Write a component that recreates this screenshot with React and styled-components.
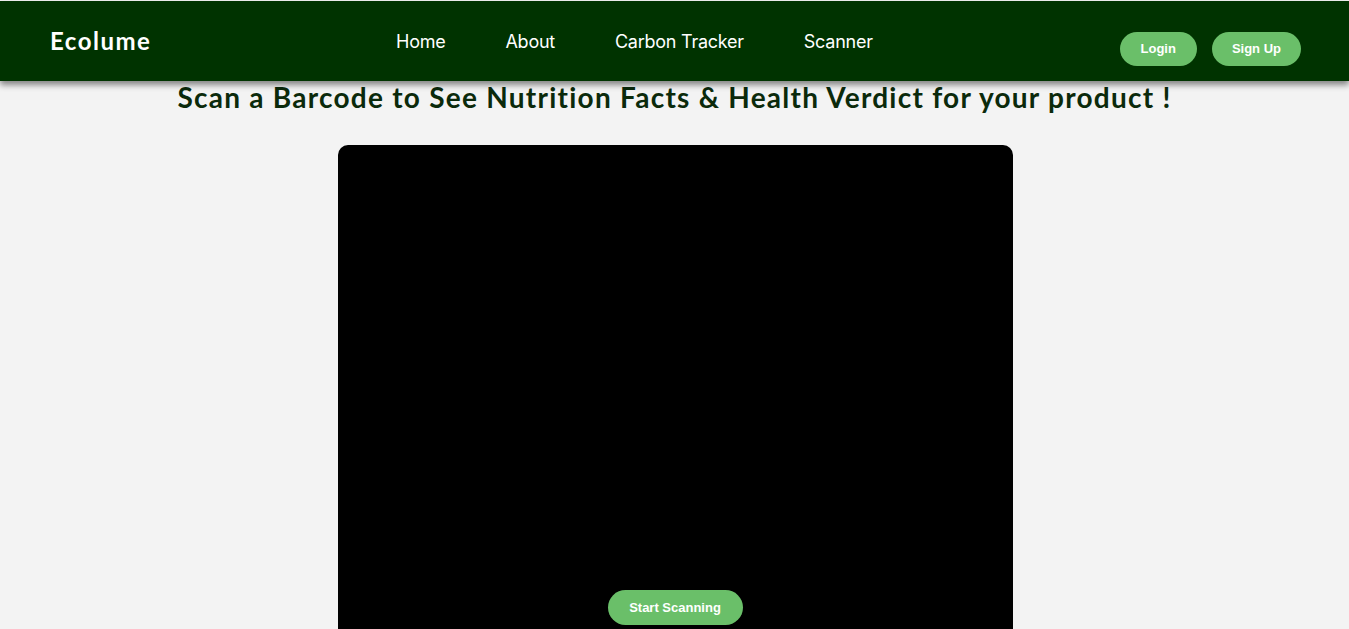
import React from 'react';
import styled, { createGlobalStyle } from 'styled-components';

const GlobalStyle = createGlobalStyle`
  body {
    margin: 0;
    background-color: #f3f3f3;
    font-family: 'Liberation Sans', Arial, sans-serif;
  }
`;

const Navbar = styled.nav`
  display: flex;
  align-items: center;
  height: 80px;
  margin-top: 1px;
  padding: 0 48px 0 50px;
  background-color: #003300;
  box-shadow: 0 4px 6px rgba(0, 0, 0, 0.45);
  position: relative;
  z-index: 1;
`;

const Logo = styled.div`
  font-family: Lato, 'Open Sans', sans-serif;
  font-weight: 700;
  font-size: 24px;
  letter-spacing: 1.5px;
  color: #ffffff;
  margin-top: -2px;
  width: 346px;
`;

const NavLinks = styled.ul`
  display: flex;
  gap: 60px;
  list-style: none;
  margin: 0;
  padding: 0;
`;

const NavLink = styled.li`
  font-family: Inter, 'Liberation Sans', sans-serif;
  font-size: 18px;
  letter-spacing: -0.25px;
  color: #ffffff;
`;

const Actions = styled.div`
  display: flex;
  gap: 15px;
  margin: 15px 0 0 auto;
`;

const PillButton = styled.button`
  height: 34px;
  padding: 0 ${(p) => p.$pad}px;
  border: none;
  border-radius: 17px;
  background-color: #6abf69;
  color: #ffffff;
  font-family: 'Liberation Sans', Arial, sans-serif;
  font-weight: 700;
  font-size: 13px;
`;

const Main = styled.main`
  display: flex;
  flex-direction: column;
  align-items: center;
`;

const Title = styled.h1`
  margin: -1px 0 0 0;
  font-family: Lato, 'Open Sans', sans-serif;
  font-weight: 700;
  font-size: 28px;
  line-height: 34px;
  letter-spacing: 1.25px;
  color: #0b2a0b;
`;

const Viewer = styled.div`
  display: flex;
  flex-direction: column;
  align-items: center;
  width: 675px;
  height: 520px;
  margin-top: 31px;
  margin-left: 1px;
  padding-top: 445px;
  box-sizing: border-box;
  background-color: #000000;
  border-radius: 10px;
`;

const ScanButton = styled.button`
  height: 35px;
  width: 135px;
  border: none;
  border-radius: 18px;
  background-color: #6abf69;
  color: #ffffff;
  font-family: 'Liberation Sans', Arial, sans-serif;
  font-weight: 700;
  font-size: 13px;
`;

const links = ['Home', 'About', 'Carbon Tracker', 'Scanner'];

export default function App() {
  return (
    <>
      <GlobalStyle />
      <Navbar>
        <Logo>Ecolume</Logo>
        <NavLinks>
          {links.map((l) => (
            <NavLink key={l}>{l}</NavLink>
          ))}
        </NavLinks>
        <Actions>
          <PillButton $pad={21}>Login</PillButton>
          <PillButton $pad={20}>Sign Up</PillButton>
        </Actions>
      </Navbar>
      <Main>
        <Title>Scan a Barcode to See Nutrition Facts &amp; Health Verdict for your product !</Title>
        <Viewer>
          <ScanButton>Start Scanning</ScanButton>
        </Viewer>
      </Main>
    </>
  );
}
